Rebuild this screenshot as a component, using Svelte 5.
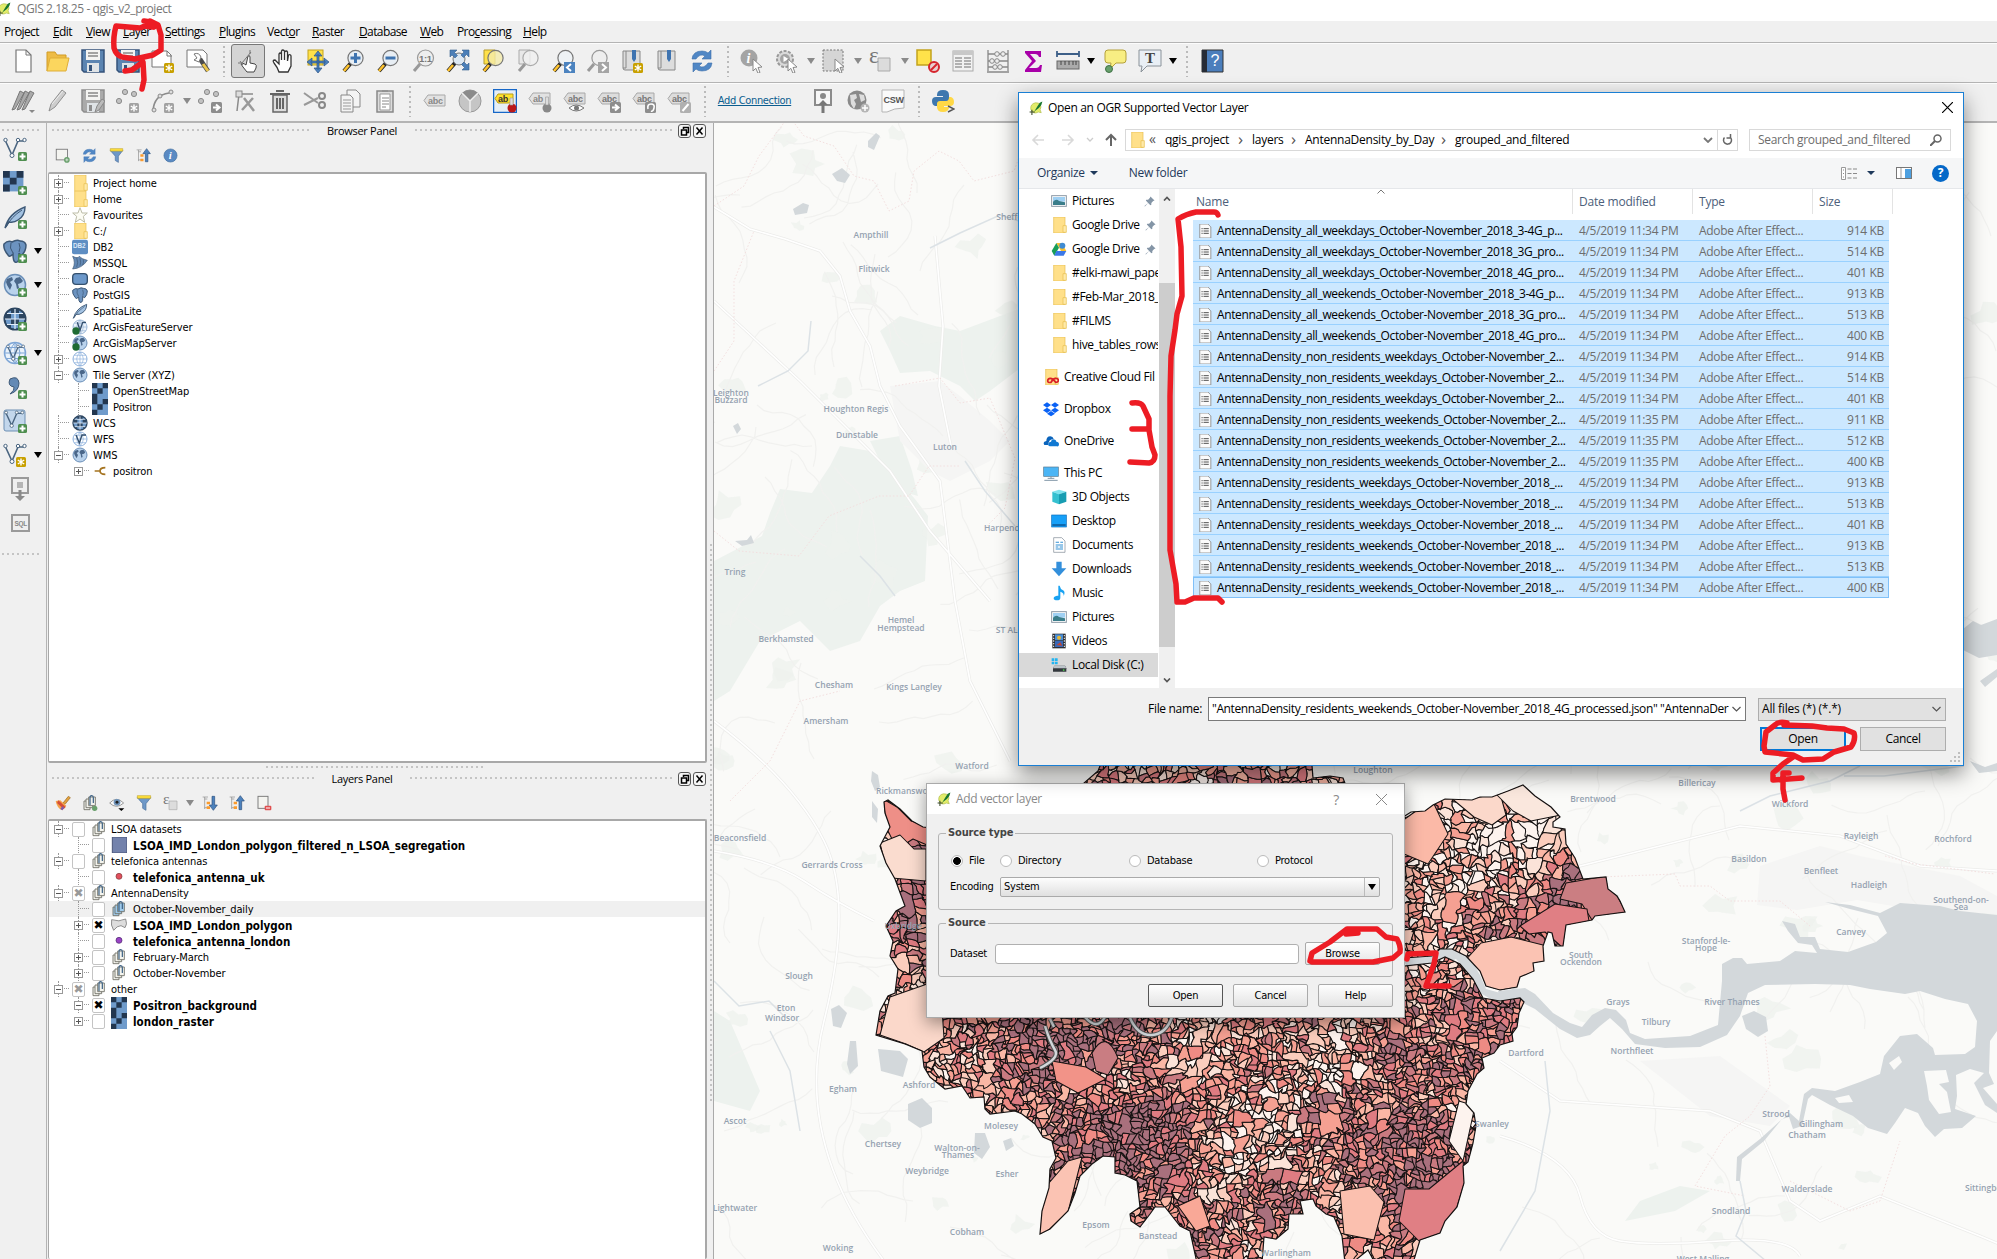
<script>
  // Menu entries: [before, accelerator, after]
  const menus = [
    ['Pro', 'j', 'ect'], ['', 'E', 'dit'], ['', 'V', 'iew'], ['', 'L', 'ayer'], ['', 'S', 'ettings'], ['', 'P', 'lugins'],
    ['Vect', 'o', 'r'], ['', 'R', 'aster'], ['', 'D', 'atabase'], ['', 'W', 'eb'], ['Pro', 'c', 'essing'], ['', 'H', 'elp']
  ];

  const lens = (c, fill) => `<path d="M3 22L10 14" stroke="#222" stroke-width="4"/><path d="M3 22L8 16" stroke="${c}" stroke-width="2.6"/><circle cx="14.5" cy="9" r="7.6" fill="${fill}" stroke="#777" stroke-width="1.2"/>`;
  const star = '<rect x="13" y="14" width="10" height="10" rx="1.5" fill="#c8a000"/><path d="M18 15.5v7M14.8 17l6.4 4M21.2 17l-6.4 4" stroke="#fff" stroke-width="1.4"/>';
  const starG = star.replace('#c8a000', '#a2a2a2');
  const plus = '<rect x="15" y="15" width="9" height="9" rx="1.5" fill="#4f8f50"/><path d="M19.5 16.5v6M16.5 19.5h6" stroke="#fff" stroke-width="2"/>';
  const vee = '<path d="M2.5 4L9 18 15 4h6" fill="none" stroke="#4a6580" stroke-width="1.6"/><g fill="#fff" stroke="#4a6580"><circle cx="2.5" cy="3" r="1.7"/><circle cx="15" cy="3" r="1.7"/><circle cx="21.5" cy="3" r="1.7"/><circle cx="9" cy="18.5" r="2"/></g>';
  const sheets = (f) => `<g fill="${f}" stroke="#6d6d65" stroke-width="1.300"><path d="M3 9h9v13H3z"/><path d="M6 6h10v13H6z"/><path d="M10 3h10v13H10z"/></g><path d="M12 15V4q0-3 2.500-3T17 4v8" fill="none" stroke="#3c6184" stroke-width="1.800"/>`;
  const globe = (f, l) => `<circle cx="12" cy="12" r="10.500" fill="${f}" stroke="${l}" stroke-width="1.500"/><path d="M1.500 12h21M12 1.500v21M3.500 6.500h17M3.500 17.500h17M12 1.500q-10 10.500 0 21M12 1.500q10 10.500 0 21" fill="none" stroke="${l}" stroke-width="1"/>`;
  const world = '<circle cx="12" cy="12" r="10.500" fill="#b9d2ec" stroke="#6b8fb8" stroke-width="1.500"/><path d="M4 6l5-2 1 3-3 2 2 3-2 5-3-5-1-3zM13 5l4-1 3 4-2 2-3 1 1 4-2 1-1-5-2-3z" fill="#4a678a"/>';
  const wcs = '<circle cx="12" cy="12" r="10.500" fill="#6f9bcb" stroke="#2c4560" stroke-width="2"/><path d="M2 6h6v6H2zM16 6h6v6h-6zM8 12h8v6H8zM8 1h8v5H8zM2 18h6v3H6zM16 18h6l-4 3z" fill="#2c4560"/><path d="M2 12h20M12 2v20M4 6.500h16M4 17.500h16" stroke="#e3eefa" stroke-width="1.200"/>';
  const tag = (b, t) => `<path d="M5 4h17v11H5L1 9.500z" fill="${b}" stroke="#a8a8a8"/><text x="5" y="13" font-size="9" font-weight="700" font-family="Liberation Sans" fill="${t}">abc</text>`;
  const tiles = '<rect width="24" height="24" fill="#6f9bcb"/><path d="M0 0h8v8H0zM16 0h8v8h-8zM8 8h8v8H8zM0 16h8v8H0z" fill="#22364f"/>';
  const elephant = '<path d="M1 5q4-4 8-2q5-3 8-1q5 0 6 4q0 6-4 10q-2 0-3-2v6q-1 4-4 3q-2-1-2-8q-4 4-5 1Q0 10 1 5z" fill="#6c93c0" stroke="#3d5876" stroke-width="1.500"/><path d="M8 4q-2 5 2 10M16 4q2 5 0 9" fill="none" stroke="#3d5876"/>';
  const feather = '<path d="M2 23Q6 8 22 2q0 9-7 13q-4 3-9 2z" fill="#a3c2e2" stroke="#3d5876" stroke-width="1.400"/><path d="M3 22Q8 12 19 5" stroke="#3d5876" fill="none"/>';
  const refresh = '<path d="M2 10Q3 2 12 2q4 0 6 2l3-3v9h-9l3-3q-5-3-9 3zM22 14q-1 8-10 8q-4 0-6-2l-3 3v-9h9l-3 3q5 3 9-3z" fill="#5087c5" stroke="#3e70ab" stroke-width=".6"/>';
  const funnel = '<path d="M2 4h20l-7 9v10l-5-3v-7z" fill="#6e98c8" stroke="#4a6f9c"/><path d="M2 1h20v4H2z" fill="#ffe03c" stroke="#b99a20" stroke-width=".8"/>';
  const updown = (d) => `<path d="M4 3v18M4 6h4M4 19h4M1 3h8" stroke="#888" fill="none"/><path d="M7 10h5v4H7zM7 17h5v4H7z" fill="#fb9b2d"/><path d="${d}" fill="#4d82bd" stroke="#2b4f7c"/>`;
  const up = updown('M17 1l6 8h-4v13h-4V9h-4z');
  const down = updown('M17 23l6-8h-4V2h-4v13h-4z');
  const folder = '<path d="M4 0h17v24H4z" fill="#ffe08a" stroke="#e6bd4c"/><path d="M18 13h5v10h-5z" fill="#ffeaa8" stroke="#e6bd4c"/>';
  const cursor = '<path d="M13 10l9 8-4 .5 2 5-2 .8-2.200-5L13 22z" fill="#fff" stroke="#888"/>';
  const pencil = '<path d="M3 22l2-7L16 1l4 3L9 18z" fill="#cdcdcd" stroke="#8f8f8f"/><path d="M6 15l11-13" stroke="#eee"/>';
  const dots = '<g fill="#c2c2c2" stroke="#8b8b8b"><circle cx="9" cy="3" r="2.600"/><circle cx="18" cy="5" r="2.600"/><circle cx="3" cy="12" r="2.600"/></g>';
  const arrowBox = '<rect x="13" y="13" width="11" height="11" rx="1.500" fill="#8d8d8d"/><path d="M15 18.500h5M18 15.500l3.500 3-3.500 3" stroke="#fff" stroke-width="2" fill="none"/>';
  const floppy = (c, d) => `<path d="M1 1h22v22H3l-2-2z" fill="${c}" stroke="${d}" stroke-width="1.500"/><path d="M5 1h14v10H5z" fill="#f4f4f2"/><path d="M7 4h10M7 7h10" stroke="#888" stroke-width="1.400"/><path d="M6 14h12v9H6z" fill="#dfe3e6"/><path d="M8 16h3v6H8z" fill="${d}"/>`;
  const picture = '<rect x="1" y="4" width="22" height="16" fill="#fff" stroke="#8b98a5" stroke-width="1.500"/><path d="M3 6h18v7H3z" fill="#9fd0f3"/><path d="M3 13q5-5 9-1l9 2v4H3z" fill="#3a7d8a"/>';

  const icons = {
    blank: '<path d="M5 1h10l5 5v17H5z" fill="#fff" stroke="#777" stroke-width="1.200"/><path d="M15 1v5h5" fill="none" stroke="#777"/>',
    open: '<path d="M1 22V3h8l2 3h9v4" fill="#eebc45" stroke="#d19b25"/><path d="M1 22L4 9h19l-3 13z" fill="#fbd65e" stroke="#dfae38"/>',
    save: floppy('#5b84b1', '#34527a'),
    saveAs: floppy('#5b84b1', '#34527a') + '<path d="M12 24l2-5 6-4 4 3-5 5z" fill="#4f9058"/>',
    layout: '<path d="M1 2h15l4 4v12H1z" fill="#fff" stroke="#777"/><path d="M16 2v5h5" fill="none" stroke="#777"/>' + star,
    composer: '<path d="M1 1h16l4 4v13H1z" fill="#fff" stroke="#777"/><path d="M14 10l8 12" stroke="#4b4b4b" stroke-width="4.500"/><path d="M17 15l5 7" stroke="#ebc64c" stroke-width="3"/><path d="M8 5q5-2 7 3l-2 5-5-2 3-2z" fill="#fff" stroke="#777"/>',
    touch: '<path d="M11 23q-5-6-6-8q1-2 5 1l2-9q2-1 2 1v6l5 1q2 1 1 4l-2 4z" fill="#fff" stroke="#444"/><path d="M6 14L15 3M14 5V1M4 12l3 4M2 14h4" stroke="#777" fill="none"/>',
    hand: '<path d="M8 23q-1-4-5-9q-2-3 1-3l4 4V5q1-2 2.500 0v6V2q1-2 3 0v9V3q2-2 3 0v9l1-6q2-1 2.500 1v10l-3 6z" fill="#fff" stroke="#333" stroke-width="1.300"/>',
    panSel: '<rect x="2" y="1" width="15" height="15" fill="#ffe14a" stroke="#c2a21c"/><g fill="#4c83bf" stroke="#2b5386" stroke-width=".7"><path d="M12 2l4 5H8zM12 24l4-5H8zM1 13l5-4v8zM23 13l-5-4v8z"/><path d="M11 6h2v14h-2zM5 12h14v2H5z"/></g>',
    zin: lens('#ffc32e', '#e8eef4') + '<path d="M14.500 4v10M9.500 9h10" stroke="#3f74b0" stroke-width="3"/>',
    zout: lens('#ffc32e', '#e8eef4') + '<path d="M9.500 9h10" stroke="#3f74b0" stroke-width="3"/>',
    z11: '<path d="M3 22L9 15" stroke="#999" stroke-width="3"/><circle cx="14.500" cy="9" r="8" fill="#eee" stroke="#999" stroke-width="1.200"/><text x="8" y="12.500" font-size="9.500" font-weight="700" font-family="Liberation Sans" fill="#777">1:1</text>',
    zfull: '<path d="M2 22L9 14" stroke="#222" stroke-width="4"/><path d="M2 22L7 16" stroke="#ffc32e" stroke-width="2.600"/><circle cx="13" cy="10" r="6" fill="#dce7f2" stroke="#777"/><path d="M4 1h7L8.500 3.500l3 3-2.500 2.500-3-3L4 8zM23 1v7l-2.500-2.500-3 3L15 6l3-3L16 1zM23 21h-7l2.500-2.500-3-3L18 13l3 3 2-2z" fill="#4c7fb8" stroke="#34608f" stroke-width=".6"/>',
    zsel: '<path d="M3 1h11v14H3z" fill="#ffe14a" stroke="#b59b2c"/>' + lens('#ffc32e', '#f4ebaacc'),
    zlay: '<path d="M3 1h11v14H3z" fill="#e8e8e8" stroke="#aaa"/><path d="M3 22L9 15" stroke="#999" stroke-width="3"/><circle cx="14.500" cy="9" r="7.600" fill="#f0f0f0cc" stroke="#aaa" stroke-width="1.200"/>',
    zlast: lens('#ffc32e', '#eef2f5') + '<rect x="13" y="13" width="11" height="11" fill="#4c83bf"/><path d="M20 15l-4 3.500 4 3.500" stroke="#fff" stroke-width="2" fill="none"/>',
    znext: '<path d="M3 22L9 15" stroke="#999" stroke-width="3"/><circle cx="14.500" cy="9" r="7.600" fill="#eee" stroke="#999" stroke-width="1.200"/><rect x="13" y="13" width="11" height="11" fill="#a5a5a5"/><path d="M17 15l4 3.500-4 3.500" stroke="#fff" stroke-width="2" fill="none"/>',
    bookNew: '<path d="M3 2h17v19H5q-2 0-2-2z" fill="#ddd" stroke="#888"/><path d="M6 2v17H3" stroke="#888" fill="none"/><path d="M12 1h4v9l-2 3-2-3z" fill="#3f74b0"/>' + star,
    book: '<path d="M3 2h17v19H5q-2 0-2-2z" fill="#ddd" stroke="#888"/><path d="M6 2v17H3" stroke="#888" fill="none"/><path d="M12 1h4v9l-2 3-2-3z" fill="#3f74b0"/>',
    refresh, funnel, up, down, folder, tiles, picture,
    info: '<circle cx="9" cy="9" r="8.500" fill="#a4a4a4"/><text x="6.500" y="14" font-size="14" font-style="italic" font-weight="700" font-family="Liberation Serif" fill="#fff">i</text>' + cursor,
    gear: '<circle cx="10" cy="10" r="8" fill="#d9d9d9" stroke="#999" stroke-width="2" stroke-dasharray="3 1.500"/><circle cx="10" cy="10" r="5" fill="#a4a4a4"/><path d="M8.500 7l5 3-5 3z" fill="#fff"/>' + cursor,
    select: '<rect x="1" y="1" width="20" height="21" fill="#d5d5d5" stroke="#777" stroke-dasharray="2 1.500"/>' + cursor,
    eps: '<path d="M9 9h12v13H9z" fill="#dcdcdc" stroke="#aaa"/><text x="0" y="14" font-size="23" font-family="Liberation Serif" fill="#777">ε</text>',
    desel: '<rect x="1" y="1" width="14" height="15" fill="#ffe24a" stroke="#c2a21c" stroke-width="1.500"/><circle cx="18" cy="18" r="5" fill="#e8d0d0" stroke="#d6252d" stroke-width="2"/><path d="M15 21l6-6" stroke="#d6252d" stroke-width="2"/>',
    table: '<rect x="2" y="2" width="20" height="20" fill="#f2f2f2" stroke="#aaa"/><path d="M2 2h20v4H2z" fill="#c8c8c8"/><path d="M4 9h7M13 9h7M4 12h7M13 12h7M4 15h7M13 15h7M4 18h7M13 18h7" stroke="#9c9c9c" stroke-width="1.400"/>',
    abacus: '<path d="M2 1v21M22 1v21M2 5h20M2 12h20M2 18h20M1 23h22" stroke="#888" fill="none" stroke-width="1.300"/><g fill="#eee" stroke="#888"><circle cx="11" cy="5" r="2.300"/><circle cx="17" cy="5" r="2.300"/><circle cx="6" cy="12" r="2.300"/><circle cx="11" cy="12" r="2.300"/><circle cx="9" cy="18" r="2.300"/><circle cx="14" cy="18" r="2.300"/></g>',
    sigma: '<path d="M4 2h16v6h-2q-1-3-4-3H9l6 7-7 7h7q3 0 4-3h2l-1 7H4v-2l7-9-7-8z" fill="#a800a8"/>',
    ruler: '<path d="M1 5h22M1 2v6M23 2v6" stroke="#3d5f88" stroke-width="1.800"/><rect x="1" y="12" width="22" height="8" fill="#ababab" stroke="#666"/><path d="M5 12v4M9 12v4M13 12v4M17 12v4M20 12v4" stroke="#444"/>',
    tip: '<path d="M5 1h15q3 0 3 3v7q0 3-3 3h-7l-6 6 1-6H5q-3 0-3-3V4q0-3 3-3z" fill="#f8ee83" stroke="#b5a13a"/><circle cx="6" cy="20" r="3.500" fill="#68a06c" stroke="#3f7145"/>',
    textAn: '<path d="M1 1h22v16H9l-6 6 1-6H1z" fill="#e9eff5" stroke="#8a9299"/><text x="7" y="14" font-size="15" font-weight="700" font-family="Liberation Serif" fill="#444">T</text>',
    helpBook: '<path d="M2 1h21v22H2z" fill="#4b7ebc" stroke="#333"/><path d="M2 1h5v22H2z" fill="#262b35"/><text x="10.500" y="17" font-size="16" font-family="Liberation Sans" fill="#fff">?</text>',
    pencils: '<path d="M1 21L9 2l4 2L4 20zM6 21L14 2l4 2L9 20zM11 21L19 2l4 2-9 16z" fill="#aaa" stroke="#777"/><path d="M18 21h6l-3 3z" fill="#888"/>',
    pencil, saveG: floppy('#aaa', '#8d8d8d') + '<path d="M14 23l2-6 5-7 3 2-6 9z" fill="#bbb" stroke="#888"/>',
    addF: dots + starG, curve: '<path d="M2 22Q3 6 18 4" fill="none" stroke="#8b8b8b" stroke-width="1.600"/><g fill="#ddd" stroke="#8b8b8b"><circle cx="3" cy="21" r="2"/><circle cx="9" cy="7" r="2"/><circle cx="20" cy="3" r="2"/></g>' + starG,
    moveF: dots + arrowBox, node: '<path d="M4 22L6 5h14" stroke="#8b8b8b" fill="none" stroke-width="1.500"/><rect x="3" y="2" width="6" height="6" fill="#ddd" stroke="#888"/><path d="M9 21L20 9M11 9l10 13" stroke="#999" stroke-width="2.500"/>',
    trash: '<path d="M5 6h14v17H5z" fill="#ddd" stroke="#666" stroke-width="1.500"/><path d="M2 5h20M8 2h8M9 9v11M12 9v11M15 9v11" stroke="#666" stroke-width="2"/>',
    cut: '<path d="M1 4l14 10M1 16L15 9" stroke="#999" stroke-width="2"/><g fill="none" stroke="#888" stroke-width="2"><circle cx="19" cy="7" r="3"/><circle cx="19" cy="16" r="3"/></g>',
    copy: '<path d="M9 1h9l4 4v13H9z" fill="#f4f4f4" stroke="#888"/><path d="M3 6h9l3 3v14H3z" fill="#f4f4f4" stroke="#888"/><path d="M5 11h8M5 14h8M5 17h8M5 20h8" stroke="#999"/>',
    paste: '<path d="M4 2h16v21H4z" fill="#dcdcdc" stroke="#888" stroke-width="1.500"/><path d="M7 5h10v16H7z" fill="#fff" stroke="#999"/><path d="M9 9h7M9 12h7M9 15h7M9 18h4M9 2h6" stroke="#888"/>',
    abc: tag('#e2e2e2', '#888').replace('<path', '<path transform="translate(0 2)"').replace('y="13"', 'y="15"'),
    pie: '<circle cx="12" cy="12" r="11" fill="#c5c5c5" stroke="#999"/><path d="M12 12L4 4Q12-2 20 4z" fill="#8b8b8b"/><path d="M12 12v11M12 12L4 4M12 12l8-8" stroke="#eee" stroke-width="1.500"/>',
    abRed: '<rect x=".5" y=".5" width="23" height="23" fill="#e6eef5" stroke="#1667c8" stroke-width="1.500"/><path d="M5 5h15v9H5L2 9.500z" fill="#ffe22e" stroke="#b89d19"/><text x="5" y="13" font-size="9" font-weight="700" font-family="Liberation Sans" fill="#333">ab</text><circle cx="19" cy="19" r="4.500" fill="#bb1818"/><path d="M17 9h3v7h-3z" fill="#ddd" stroke="#999" stroke-width=".6"/>',
    abGrey: tag('#e2e2e2', '#888').replace('abc', 'ab') + '<circle cx="19" cy="19" r="4.500" fill="#888"/><path d="M17.500 8h3v8h-3z" fill="#ddd" stroke="#999" stroke-width=".6"/>',
    abEye: tag('#ddd', '#777') + '<path d="M6 19q7-6 15 0q-8 6-15 0z" fill="#fff" stroke="#777"/><circle cx="13.500" cy="19" r="2.500" fill="#777"/>',
    abMove: tag('#ddd', '#777') + arrowBox,
    abRot: tag('#ddd', '#777') + '<rect x="13" y="13" width="11" height="11" rx="1.500" fill="#8d8d8d"/><path d="M16 20q-1-5 3-5t3 4-3 3" stroke="#fff" stroke-width="1.600" fill="none"/>',
    abEdit: tag('#ddd', '#777') + '<rect x="13" y="13" width="11" height="11" rx="1.500" fill="#b0b0b0"/><path d="M15.500 22l6-7" stroke="#fff" stroke-width="2"/>',
    dbUp: '<path d="M4 1h16v15H4z" fill="#f6f6f6" stroke="#8b8b8b" stroke-width="2"/><circle cx="12" cy="7" r="3" fill="#888"/><path d="M12 11l5 5h-3.500v8h-3v-8H7z" fill="#777"/>',
    globeG: '<circle cx="11" cy="11" r="9.500" fill="#8a8a8a"/><path d="M4 6l6-1 1 4-3 2 2 4-2 5-3-5zM13 5l5 1 1 5-4 2z" fill="#ddd"/><circle cx="19" cy="19" r="4.500" fill="#b5b5b5"/><path d="M19 16v6M16 19h6" stroke="#fff" stroke-width="1.500"/>',
    csw: '<path d="M1 1h22v18q-10 0-17 4H1z" fill="#fafafa" stroke="#b5b5b5"/><text x="2.500" y="14" font-size="9" font-weight="700" font-family="Liberation Sans" fill="#555">CSW</text>',
    python: '<path d="M6 6q0-5 6-5t6 5v4q0 3-3 3H9q-3 0-3 4H4q-3-1-3-5t4-4h7V7H6z" fill="#3e77ae"/><path d="M18 18q0 5-6 5t-6-5v-3q0-3 3-3h6q3 0 3-4h2q3 1 3 5t-4 4h-6v1z" fill="#ffd846"/><path d="M17 17l6 3-6 3" stroke="#555" stroke-width="1.500" fill="none"/>',
    lVec: vee + plus, lRas: '<g transform="scale(.85)">' + tiles + '</g>' + plus, lSpa: feather + plus,
    lPg: elephant + plus, lWms: world + plus, lWcs: wcs + plus,
    lWfs: globe('#eaf2fa', '#7fa6d6') + '<g transform="translate(3 3) scale(.8)">' + vee + '</g>' + plus,
    lCsv: '<path d="M7 4q8-4 9 4q0 8-9 11q5-4 4-7q-7-1-4-8z" fill="#6389b5" stroke="#3d5876"/>' + plus,
    lVirt: '<rect x="1" y="1" width="21" height="21" rx="2" fill="#c3d7ec" stroke="#6d8fb3"/><g transform="translate(1 1) scale(.85)">' + vee + '</g>' + plus,
    lNew: vee + star,
    lGps: '<path d="M4 1h16v15H4z" fill="#efefef" stroke="#9a9a9a" stroke-width="2"/><path d="M9 5h6v6H9z" fill="#b5b5b5"/><path d="M12 24l-5-5h3.500v-6h3v6H17z" fill="#8a8a8a"/>',
    lSql: '<rect x="4" y="4" width="17" height="16" fill="#efefef" stroke="#9a9a9a" stroke-width="2"/><text x="6.500" y="14.500" font-size="6.500" font-weight="700" font-family="Liberation Sans" fill="#888">SQL</text>',
    addSel: '<rect x="2" y="2" width="18" height="17" fill="#f4f4f0" stroke="#777" stroke-width="1.400"/><circle cx="19" cy="19" r="4.500" fill="#69a06c"/><path d="M19 16.500v5M16.500 19h5" stroke="#fff"/>',
    infoBlue: '<circle cx="12" cy="12" r="10.500" fill="#5a8ac3" stroke="#44709f"/><text x="9" y="18" font-size="17" font-style="italic" font-weight="700" font-family="Liberation Serif" fill="#fff">i</text>',
    star: '<path d="M12 1l3 8h8l-6 5 2 9-7-5-7 5 2-9-6-5h8z" fill="#fcfcf4" stroke="#bcbca8" stroke-width="1.500"/>',
    db2: '<rect y="1" width="24" height="22" rx="3" fill="#5e8ec3"/><text x="1.500" y="14" font-size="9.500" font-weight="700" font-family="Liberation Sans" fill="#dce9f7">DB2</text>',
    mssql: '<path d="M1 2q8 4 10 0q3 4 12 6q-8 12-22 13q5-9 0-19z" fill="#6389b5" stroke="#3d5876"/><path d="M7 4q3 8 0 14M12 5q2 6 0 11M17 7q1 4-1 8" stroke="#3d5876" fill="none"/>',
    oracle: '<rect x="1" y="4" width="22" height="16" rx="5" fill="#6c98ca" stroke="#34506e" stroke-width="2"/>',
    elephant, feather, world,
    arcF: globe('#eaf2fa', '#9ab6d6') + '<path d="M8 5l4 12 4-12h5" fill="none" stroke="#34506e" stroke-width="2"/><circle cx="6" cy="18" r="5.500" fill="#1f6b33"/>',
    arcM: world + '<circle cx="6" cy="18" r="5.500" fill="#1f6b33"/>',
    ows: globe('#fff', '#8cb0dc'), wcs,
    wfs: globe('#fff', '#8cb0dc') + '<path d="M6 6l5 12 4-12h6" fill="none" stroke="#34506e" stroke-width="2"/>',
    plug: '<path d="M4 12h8M20 7q-8 0-8 5t8 5" fill="none" stroke="#a5731f" stroke-width="2.500"/>',
    brush: '<path d="M12 12l8-10 3 2-8 10z" fill="#e3a23f" stroke="#9b6a1e"/><path d="M1 9l7-1 9 8-6 7Q3 20 1 9z" fill="#f4a24a"/><path d="M5 8l11 10-3 3L3 12z" fill="#d54e38"/><path d="M8 21l3-4 3 2-3 4z" fill="#7a5fb0"/>',
    sheetAdd: sheets('#f1f1ec') + '<circle cx="19" cy="20" r="4" fill="#69a06c"/>',
    sheet: sheets('#f4f4ee'), sheetSel: sheets('#9fcbec'),
    eye: '<path d="M1 12Q11 1 22 12Q11 22 1 12z" fill="#fafafa" stroke="#999" stroke-width="1.500"/><circle cx="12" cy="11" r="5" fill="#6e93ba"/><circle cx="12" cy="11" r="2.200" fill="#222"/><path d="M14 20h9l-4.500 4z" fill="#000"/>',
    remove: '<rect x="3" y="2" width="15" height="18" fill="#f4f4f0" stroke="#777" stroke-width="1.400"/><rect x="13" y="16" width="10" height="7" rx="1.500" fill="#e05050"/><path d="M15 19.500h6" stroke="#fff" stroke-width="1.500"/>',
    square: '<rect x="2" y="0" width="22" height="24" fill="#7382ac" stroke="#4a5578" stroke-width="1.500"/>',
    dotR: '<circle cx="12" cy="11" r="4.500" fill="#e2505e" stroke="#733"/>', dotP: '<circle cx="12" cy="11" r="4.500" fill="#9a43c4" stroke="#426"/>',
    poly: '<path d="M1 4q11 4 21-1q3 8-1 13l-6-3q-6 0-11 7Q-1 12 1 4z" fill="#ddd" stroke="#888" stroke-width="1.400"/>',
    gdrive: '<path d="M8 3h8l7 12h-8z" fill="#fbc02d"/><path d="M8 3l4 7-7 12-4-7z" fill="#189d58"/><path d="M8 15h15l-4 7H5z" fill="#3b78e7"/><circle cx="17" cy="7" r="4.500" fill="#3f8bd3"/>',
    cc: folder + '<path d="M7 18q0-4 4-4t8 6q4 0 4-3t-4-3-7 6q-5 1-5-2z" fill="none" stroke="#da1f26" stroke-width="2.500"/>',
    dropbox: '<path d="M6 2l6 4-6 4-6-4zM18 2l6 4-6 4-6-4zM6 10l6 4-6 4-6-4zM18 10l6 4-6 4-6-4zM12 15l6 4-6 4-6-4z" fill="#0a62f5"/>',
    onedrive: '<path d="M2 18q-3-5 3-6q0-7 6-7q4 0 5 4q-8 0-8 9z" fill="#0a64bc"/><path d="M10 20q-3-1-2-4t4-3q1-5 6-3q2 1 2 3q4 0 4 4t-3 3z" fill="#1078d2"/>',
    pc: '<rect x="1" y="3" width="22" height="14" fill="#4bb5f5" stroke="#55788f"/><path d="M7 20h10M2 23h20M12 17v3" stroke="#8197a8" stroke-width="1.500"/>',
    cube: '<path d="M2 4l10-3 11 3-11 4z" fill="#7fe3ee"/><path d="M2 4l10 4v15L2 19z" fill="#35c0d0"/><path d="M12 8l11-4v15l-11 4z" fill="#179db2"/>',
    desktop: '<rect x="1" y="3" width="22" height="18" fill="#17a0f8" stroke="#0b6dbb"/><path d="M2 18h20" stroke="#0b4f8a" stroke-width="2"/>',
    doc: '<path d="M4 1h12l5 5v17H4z" fill="#fff" stroke="#7c8792"/><path d="M7 8h5M7 12h11M7 15h4M13 15h5M7 18h11M14 8h4" stroke="#3290d4" stroke-width="1.600"/>',
    dl: '<path d="M8 1h8v10h7L12 23 1 11h7z" fill="#338fdb"/>',
    music: '<path d="M13 1q1 5 5 7t1 9q1-5-5-7v9q0 4-5 4t-5-3 5-4h2V1z" fill="#18a2f2"/>',
    video: '<rect x="2" y="1" width="20" height="22" fill="#2d2f33"/><rect x="6" y="2" width="12" height="9" fill="#4a8fd8"/><rect x="6" y="12" width="12" height="9" fill="#3868b8"/><circle cx="12" cy="7" r="3" fill="#e8b830"/><path d="M8 18l6-4 3 5z" fill="#c5432c"/><path d="M4 3v18M20 3v18" stroke="#eee" stroke-width="1.600" stroke-dasharray="2 2"/>',
    disk: '<path d="M1 2h4v4H1zM6 2h4v4H6zM1 7h4v4H1zM6 7h4v4H6z" fill="#22b4f0"/><path d="M5 13h16l2 4v5H3v-5z" fill="#33383d"/><path d="M5 13h16l2 4H3z" fill="#bcc3c9"/><circle cx="19" cy="19.500" r="1.300" fill="#4fe04f"/>',
    file: '<path d="M3 0h14l5 5v19H3z" fill="#fbfbfb" stroke="#8d8d8d" stroke-width="1.500"/><path d="M6 8h2M9.500 8h9M6 12h2M9.500 12h9M6 16h2M9.500 16h9" stroke="#444" stroke-width="1.600"/>',
    pin: '<path d="M14 1l9 9-3 1-4 4v4l-2 1-5-5-7 8-1-1 8-7-5-5 1-2h4l4-4z" fill="#8495a6"/>',
    q: '<path d="M3 14Q2 5 11 3q5 0 8 2q3 6 0 10l2 5-5-1q-9 5-13-5z" fill="#e2ec6a" stroke="#a5b43c"/><path d="M9 18L15 8q3-6 8-7q-1 7-6 11z" fill="#17762f"/><path d="M1 19h9M5 15v9" stroke="#3b4a2a" stroke-width="1.800"/>'
  };

  const bar1 = ['blank', 'open', 'save', 'saveAs', 'layout', 'composer', '|', 'touch!', 'hand', 'panSel', 'zin', 'zout', 'z11', 'zfull', 'zsel', 'zlay', 'zlast', 'znext', 'bookNew', 'book', 'refresh', '|', 'info', 'gear', 'v', 'select', 'v', 'eps', 'v', 'desel', 'table', 'abacus', 'sigma', 'ruler', 'V', 'tip', 'textAn', 'V', '|', 'helpBook'];
  const bar2 = ['pencils', 'pencil', 'saveG', 'addF', 'curve', 'v', 'moveF', 'node', 'trash', 'cut', 'copy', 'paste', '|', 'abc', 'pie', 'abRed', 'abGrey', 'abEye', 'abMove', 'abRot', 'abEdit', '|', 'link', 'dbUp', 'globeG', 'csw', '|', 'python'];
  const side = ['lVec', 'lRas', 'lSpa', 'lPg+', 'lWms+', 'lWcs', 'lWfs+', 'lCsv', 'lVirt', 'lNew+', 'lGps', 'lSql'];

  // depth, expander, icon, label
  const browser = [
    [0, '+', 'folder', 'Project home'], [0, '+', 'folder', 'Home'], [0, '', 'star', 'Favourites'], [0, '+', 'folder', 'C:/'],
    [0, '', 'db2', 'DB2'], [0, '', 'mssql', 'MSSQL'], [0, '', 'oracle', 'Oracle'], [0, '', 'elephant', 'PostGIS'],
    [0, '', 'feather', 'SpatiaLite'], [0, '', 'arcF', 'ArcGisFeatureServer'], [0, '', 'arcM', 'ArcGisMapServer'], [0, '+', 'ows', 'OWS'],
    [0, '-', 'world', 'Tile Server (XYZ)'], [1, '', 'tiles', 'OpenStreetMap'], [1, '', 'tiles', 'Positron'],
    [0, '', 'wcs', 'WCS'], [0, '', 'wfs', 'WFS'], [0, '-', 'world', 'WMS'], [1, '+', 'plug', 'positron']
  ];
  // depth, expander, check state, icon, label, bold
  const layers = [
    [0, '-', '', 'sheet', 'LSOA datasets', 0], [1, '', '', 'square', 'LSOA_IMD_London_polygon_filtered_n_LSOA_segregation', 1],
    [0, '-', '', 'sheet', 'telefonica antennas', 0], [1, '', '', 'dotR', 'telefonica_antenna_uk', 1],
    [0, '-', 'g', 'sheet', 'AntennaDensity', 0], [1, '', '', 'sheetSel', 'October-November_daily', 0],
    [1, '+', 'x', 'poly', 'LSOA_IMD_London_polygon', 1], [1, '', '', 'dotP', 'telefonica_antenna_london', 1],
    [1, '+', '', 'sheet', 'February-March', 0], [1, '+', '', 'sheet', 'October-November', 0],
    [0, '-', 'g', 'sheet', 'other', 0], [1, '-', 'x', 'tiles', 'Positron_background', 1], [1, '+', '', 'tiles', 'london_raster', 1]
  ];
  const places = [
    ['picture', 'Pictures', 1, 1], ['folder', 'Google Drive', 1, 1], ['gdrive', 'Google Drive', 1, 1], ['folder', '#elki-mawi_pape', 1], ['folder', '#Feb-Mar_2018_', 1],
    ['folder', '#FILMS', 1], ['folder', 'hive_tables_rows', 1], ['cc', 'Creative Cloud Fil', 0], ['dropbox', 'Dropbox', 0], ['onedrive', 'OneDrive', 0], ['pc', 'This PC', 0],
    ['cube', '3D Objects', 1], ['desktop', 'Desktop', 1], ['doc', 'Documents', 1], ['dl', 'Downloads', 1], ['music', 'Music', 1], ['picture', 'Pictures', 1], ['video', 'Videos', 1], ['disk', 'Local Disk (C:)', 1]
  ];
  const on = 'October-November_2';
  const groups = [
    ['all_weekdays_' + on + '018_', [914, 514, 401], ['3-4G_p...', '3G_pro...', '4G_pro...'], '34'],
    ['all_weekends_' + on + '018_', [913, 513, 400], ['3-4G_p...', '3G_pro...', '4G_pro...'], '34'],
    ['non_residents_weekdays_' + on + '...', [914, 514, 401], ['', '', ''], '34'],
    ['non_residents_weekends_' + on + '...', [911, 512, 400], ['', '', ''], '35'],
    ['residents_weekdays_' + on + '018_...', [913, 513, 401], ['', '', ''], '34'],
    ['residents_weekends_' + on + '018_...', [913, 513, 400], ['', '', ''], '34']
  ];
  const files = groups.flatMap(([n, sizes, ends, min]) => sizes.map((s, i) => ({ name: 'AntennaDensity_' + n + ends[i], date: `4/5/2019 11:${min} PM`, size: s + ' KB' })));

  // ---- Map ----
  let seed = 7;
  const rnd = () => { seed = (seed * 1664525 + 1013904223) % 4294967296; return seed / 4294967296; };
  const hash = (x, y, k) => { const s = Math.sin(x * 127.1 + y * 311.7 + k * 74.7) * 43758.5453; return s - Math.floor(s); };
  const noise = (x, y, k) => {
    const xi = Math.floor(x), yi = Math.floor(y), u = x - xi, v = y - yi;
    const a = hash(xi, yi, k), b = hash(xi + 1, yi, k), c = hash(xi, yi + 1, k), d = hash(xi + 1, yi + 1, k);
    const s = u * u * (3 - 2 * u), t = v * v * (3 - 2 * v);
    return a + (b - a) * s + (c - a) * t + (a - b - c + d) * s * t;
  };
  const area = (p) => { let s = 0; p.forEach(([x, y], i) => { const [a, b] = p[(i + 1) % p.length]; s += x * b - a * y; }); return Math.abs(s) / 2; };
  const clip = (p, nx, ny, c) => {
    const out = [];
    p.forEach((a, i) => {
      const b = p[(i + 1) % p.length], da = a[0] * nx + a[1] * ny - c, db = b[0] * nx + b[1] * ny - c;
      if (da >= 0) out.push(a);
      if (da * db < 0) { const t = da / (da - db); out.push([a[0] + (b[0] - a[0]) * t, a[1] + (b[1] - a[1]) * t]); }
    });
    return out;
  };
  // Shading hot spots: x, y, radius, strength
  const pale = [[1435, 895, 50, .4], [1265, 1110, 50, .2], [1330, 1055, 40, .35], [960, 1065, 45, .35], [1420, 960, 35, .45], [1540, 815, 45, .5], [1470, 1105, 25, .5], [1230, 1170, 30, .35], [1475, 840, 35, .3]];
  const dark = [[1560, 900, 60, .3], [1470, 1040, 50, .25], [1030, 1080, 60, .2], [1150, 1120, 60, .25], [1160, 1190, 50, .2], [1380, 1120, 70, .25], [905, 910, 40, .2], [1430, 1215, 60, .2], [1060, 1045, 40, .25], [1100, 1160, 50, .25]];
  const blob = (list, x, y) => list.reduce((s, [a, b, r, k]) => s + k * Math.exp(-((x - a) ** 2 + (y - b) ** 2) / (r * r)), 0);
  const colors = ['#fdf3ee', '#fbe3d8', '#fbcdbd', '#fab7a5', '#f5a092', '#ee8b84', '#df7c82', '#c97a80', '#a9707d'];
  const cellPaths = colors.map(() => '');
  const emit = (p) => {
    const cx = p.reduce((s, q) => s + q[0], 0) / p.length, cy = p.reduce((s, q) => s + q[1], 0) / p.length;
    const v = noise(cx / 40, cy / 40, 3) * .55 + rnd() * .8 - .12 + blob(dark, cx, cy) - blob(pale, cx, cy);
    let d = '';
    p.forEach((a, i) => {
      const b = p[(i + 1) % p.length], n = Math.max(1, Math.round(Math.hypot(b[0] - a[0], b[1] - a[1]) / 3));
      for (let k = 0; k < n; k++) {
        const x = a[0] + (b[0] - a[0]) * k / n, y = a[1] + (b[1] - a[1]) * k / n;
        d += (d ? 'L' : 'M') + (x + (noise(x / 5, y / 5, 1) - .5) * 8).toFixed(1) + ' ' + (y + (noise(x / 5, y / 5, 2) - .5) * 8).toFixed(1);
      }
    });
    cellPaths[Math.max(0, Math.min(8, Math.floor(v * 9)))] += d + 'Z';
  };
  const split = (p) => {
    const xs = p.map((q) => q[0]), ys = p.map((q) => q[1]);
    const x0 = Math.min(...xs), x1 = Math.max(...xs), y0 = Math.min(...ys), y1 = Math.max(...ys);
    const cx = (x0 + x1) / 2, cy = (y0 + y1) / 2;
    const r = Math.hypot((cx - 1225) / 370, (cy - 1010) / 300);
    const target = 36 + 260 * Math.max(0, r - .6) ** 2 + (noise(cx / 26, cy / 26, 9) > .8 ? 90 : 0);
    const a = area(p);
    if (a < target * 1.5 || (a < target * 8 && rnd() < .035)) return emit(p);
    const base = x1 - x0 > y1 - y0 ? 0 : Math.PI / 2, ang = base + (rnd() - .5) * .9;
    const nx = Math.cos(ang), ny = Math.sin(ang);
    const px = cx + (rnd() - .5) * (x1 - x0) * .2, py = cy + (rnd() - .5) * (y1 - y0) * .2, c = px * nx + py * ny;
    const l = clip(p, nx, ny, c), q = clip(p, -nx, -ny, -c);
    if (l.length < 3 || q.length < 3) return emit(p);
    split(l); split(q);
  };
  split([[865, 735], [1640, 735], [1640, 1275], [865, 1275]]);

  const london = 'M884 801L888 799 900 808 912 820 923 826 960 830 1050 790 1083 783 1098 770 1110 740H1310L1313 777 1330 775 1343 777 1346 785 1400 818 1411 811 1425 810 1433 804 1445 798 1472 799 1480 796 1492 796 1508 790 1523 784 1535 795 1551 806 1560 816 1553 821 1553 826 1565 828 1566 843 1575 857 1583 878 1606 876 1608 888 1617 895 1620 900 1625 911 1595 915 1592 919 1566 924 1563 945 1555 945 1552 932 1548 931 1543 945 1544 960 1533 962 1534 970 1520 976 1517 986 1500 989 1486 985 1480 970 1466 955 1452 948 1440 948 1432 955 1404 957 1404 965 1432 962 1445 956 1460 963 1473 978 1483 997 1500 1000 1520 997 1524 1001 1519 1012 1517 1026 1512 1033 1513 1040 1500 1044 1494 1052 1482 1057 1484 1067 1477 1073 1468 1090 1466 1103 1474 1112 1476 1125 1473 1142 1468 1161 1463 1165 1464 1182 1457 1206 1445 1220 1440 1232 1420 1239 1413 1262H1375L1368 1249 1352 1262H1345L1342 1235 1334 1216 1326 1213 1316 1205 1313 1198 1300 1200 1303 1213 1289 1213 1288 1228 1276 1238 1264 1236 1262 1262H1197L1190 1230 1180 1225 1165 1206 1155 1206 1150 1213 1140 1226 1131 1220 1130 1213 1140 1206 1137 1180 1125 1174 1115 1172 1115 1156 1103 1155 1092 1163 1080 1175 1075 1192 1068 1210 1050 1228 1040 1233 1042 1210 1049 1187 1050 1168 1056 1157 1052 1140 1043 1136 1035 1123 1022 1113 1015 1110 990 1113 985 1108 984 1096 970 1097 962 1085 945 1088 930 1076 924 1066 922 1050 905 1043 876 1034 880 1010 888 995 895 992 898 968 890 955 893 940 886 925 896 910 905 905 895 878 886 862 880 845 890 826 885 812z';
  const blobs = [];
  for (let i = 0; i < 190; i++) {
    const x = 714 + rnd() * 1283, y = 125 + rnd() * 1130, r = 3 + rnd() * 10;
    let d = '';
    for (let k = 0; k < 10; k++) { const t = k / 10 * 6.283, q = r * (.5 + rnd() * .9); d += (k ? 'L' : 'M') + (x + Math.cos(t) * q * 1.3).toFixed(1) + ' ' + (y + Math.sin(t) * q).toFixed(1); }
    blobs.push(d + 'Z');
  }
  let minor = '';
  for (let i = 0; i < 260; i++) {
    let x = 714 + rnd() * 1283, y = 125 + rnd() * 1130, t = rnd() * 6.283;
    minor += `M${x.toFixed(0)} ${y.toFixed(0)}`;
    for (let k = 0; k < 11; k++) { t += (rnd() - .5) * .9; x += Math.cos(t) * 9; y += Math.sin(t) * 9; minor += `L${x.toFixed(1)} ${y.toFixed(1)}`; }
  }
  const roads = 'M714 206L750 228 785 238 820 250 840 275 850 310 870 345 880 385 900 425 940 480 950 560 955 600 970 680 1010 760M714 300L800 380 850 430 890 470 930 530 990 600M714 850q60 10 90 30t70 40M1500 1060l60 40 150 10 50 20 30 70 30 20 60-25 100 40 97 40M1500 1135q70 20 80 60t40 45 100 0 80 15M1560 870l80-20 100-25 100 10 80 30 77 5M714 720q80 60 110 120t0 180 60 240M935 235l8 90-4 60 12 60';
  const towns = [
    ['Ampthill', 871, 237], ['Flitwick', 874, 271], ['Shefford', 1014, 219], ['Leighton', 731, 395], ['Buzzard', 731, 402], ['Houghton Regis', 856, 411], ['Dunstable', 857, 437], ['Luton', 945, 449], ['Harpenden', 1007, 530], ['Tring', 735, 574],
    ['Hemel', 901, 622], ['Hempstead', 901, 630], ['ST ALBANS', 1018, 632], ['Berkhamsted', 786, 641], ['Chesham', 834, 687], ['Kings Langley', 914, 689], ['Amersham', 826, 723], ['Watford', 972, 768], ['Rickmansworth', 908, 793], ['Beaconsfield', 740, 840], ['Gerrards Cross', 832, 867], ['Uxbridge', 903, 928], ['Slough', 799, 978], ['Eton', 786, 1010], ['Windsor', 782, 1020], ['Egham', 843, 1091], ['Ashford', 919, 1087], ['Ascot', 735, 1123], ['Molesey', 1001, 1128], ['Chertsey', 883, 1146], ['Walton-on-', 957, 1150], ['Thames', 958, 1157], ['Weybridge', 927, 1173], ['Esher', 1007, 1176], ['Lightwater', 735, 1210], ['Cobham', 967, 1234], ['Epsom', 1096, 1227], ['Banstead', 1158, 1238], ['Woking', 838, 1250], ['Warlingham', 1286, 1255], ['Loughton', 1373, 772],
    ['Brentwood', 1593, 801], ['Billericay', 1697, 785], ['Wickford', 1790, 806], ['Rayleigh', 1861, 838], ['Rochford', 1953, 841], ['Basildon', 1749, 861], ['Benfleet', 1821, 873], ['Hadleigh', 1869, 887], ['Southend-on-', 1961, 902], ['Sea', 1961, 909], ['Canvey', 1851, 934], ['Stanford-le-', 1706, 943], ['Hope', 1706, 950], ['South', 1581, 957], ['Ockendon', 1581, 964], ['Grays', 1618, 1004], ['River Thames', 1732, 1004], ['Tilbury', 1656, 1024], ['Dartford', 1526, 1055], ['Northfleet', 1632, 1053], ['Strood', 1776, 1116], ['Gillingham', 1821, 1126], ['Chatham', 1807, 1137], ['Swanley', 1492, 1126], ['Walderslade', 1807, 1191], ['Snodland', 1731, 1213], ['Sittingbourne', 1993, 1190], ['West Malling', 1703, 1261]
  ];
</script>

{#snippet ic(name, size = 24)}
  <svg class="ic" width={size} height={size} viewBox="0 0 24 24">{@html icons[name]}</svg>
{/snippet}

{#snippet toolbar(items)}
  <div class="toolbar">
    {#each items as it}
      {#if it === '|'}<i class="handle"></i>
      {:else if it === 'v' || it === 'V'}<i class="caret" class:dark={it === 'V'}></i>
      {:else if it === 'link'}<a class="conn" href="#top">Add Connection</a>
      {:else}<span class="tool"><span class:pressed={it.endsWith('!')}>{@render ic(it.replace('!', ''), 24)}</span></span>{/if}
    {/each}
  </div>
{/snippet}

{#snippet panelTitle(text)}
  <div class="ptitle">
    <i class="grip"></i><span>{text}</span><i class="grip"></i>
    <svg width="28" height="14" viewBox="0 0 28 14"><g fill="#f6f6f6" stroke="#555"><rect x=".5" y=".5" width="12" height="13" rx="2.5" /><rect x="15.500" y=".5" width="12" height="13" rx="2.500" /></g><path d="M5.500 5V3.500h5v5H9M3.500 6h5v5h-5zM18.500 3.500l6 7M24.500 3.500l-6 7" fill="none" stroke="#000" stroke-width="1.500" /></svg>
  </div>
{/snippet}

<div class="app">
  <header>{@render ic('q', 14)}<span>QGIS 2.18.25 - qgis_v2_project</span></header>
  <nav class="menu">{#each menus as m}<span>{m[0]}<u>{m[1]}</u>{m[2]}</span>{/each}</nav>
  {@render toolbar(bar1)}
  {@render toolbar(bar2)}
  <main>
    <aside>
      <i class="grip"></i>
      {#each side as s}
        <div class="stool">{@render ic(s.replace('+', ''), 24)}{#if s.endsWith('+')}<i class="caret dark"></i>{/if}</div>
      {/each}
      <i class="grip end"></i>
    </aside>
    <section class="docks">
      {@render panelTitle('Browser Panel')}
      <div class="ptools b">{#each ['addSel', 'refresh', 'funnel', 'up', 'infoBlue'] as n}<span>{@render ic(n, 15)}</span>{/each}</div>
      <div class="tree btree">
        {#each browser as [depth, ex, icon, label]}
          <div class="row" class:child={depth}>
            <i class="stem"></i><span class="ex">{#if ex}<b class:minus={ex === '-'}></b>{/if}</span>{@render ic(icon, 16)}<span class="lab">{label}</span>
          </div>
        {/each}
      </div>
      <i class="split"></i>
      {@render panelTitle('Layers Panel')}
      <div class="ptools l">{#each ['brush', 'sheetAdd', 'eye', 'funnel', 'eps', 'v', 'down', 'up', 'remove'] as n}{#if n === 'v'}<i class="caret"></i>{:else}<span>{@render ic(n, 16)}</span>{/if}{/each}</div>
      <div class="tree ltree">
        {#each layers as [depth, ex, chk, icon, label, bold], i}
          <div class="row" class:child={depth} class:hl={i === 5}>
            <i class="stem"></i><span class="ex">{#if ex}<b class:minus={ex === '-'}></b>{/if}</span><span class="chk" class:grey={chk === 'g'}>{chk ? '✖' : ''}</span>{@render ic(icon, 16)}<span class="lab" class:bold>{label}</span>
          </div>
        {/each}
      </div>
    </section>
    <i class="vsplit"></i>
    <div class="map">
      <svg width="1283" height="1137" viewBox="714 122 1283 1137">
        <defs><clipPath id="boundary"><path d={london} /></clipPath></defs>
        <g fill="#edf2ee">
          <path d="M714 560L762 535 770 512 780 488 812 492 830 465 840 445 870 450 890 470 915 498 928 515 925 580 900 590 880 605 860 640 830 650 800 620 760 640 730 690 714 700z" />
          <path d="M870 440L900 435 912 470 918 495 900 490 880 460z" />
          <path d="M880 330L900 315 935 325 960 330 1019 308V368L990 390 975 400 960 385 930 370 900 372 890 350z" />
          <path d="M714 1010L730 1020 760 1090 750 1110 714 1100zM1640 1200l40-15 30 5-35 20-50 10z" />
          {#each blobs as d}<path {d} opacity=".75" />{/each}
        </g>
        <path d="M890 385L940 380 960 395 990 420 1010 440 990 460 950 480 930 470 900 440zM1760 865l60-20 40 10 100 20 37 20v18l-80-4-60-10-60 10-40-5zM1640 1060l80-5 70 50-20 20-60-10z" fill="#f5f5f4" />
        <path d={minor} fill="none" stroke="#f1f1ef" stroke-width="1.200" />
        <path d={roads} fill="none" stroke="#ececea" stroke-width="3" />
        <path d={roads} fill="none" stroke="#fff" stroke-width="1.600" />
        <g fill="none" stroke="#f3dfdf" stroke-dasharray="1.500 2">
          <path d="M714 205l30-20 15-30 30-40 15 20 30 10 20 30 20 5 15 30 20-10 5-30 25-20 20 10 15 20 40-10 15-40 20-20M714 530l25 20 60 5 30-40 50-20 30 0 20-30 30 0M714 370l20-30 0-60 20-50M895 385l45-8 20 25 30-5 25 60-10 50-20 20M1600 876l75-3 5 12 30 0 20 15 50 0 30 25M1885 855l30 8 80 10M1765 1035l5 50-20 30-25 20-30 50 50 10M1790 1180l60 30 30-10 20-60M730 800l40-40 30-60 40-10" />
        </g>
        <g fill="#d3d8db">
          <path d="M1498 990L1525 987 1535 993 1553 1012 1570 1022 1582 1026 1592 1014 1605 1007 1616 1009 1626 1019 1630 1032 1645 1038 1690 1035 1718 1024 1722 980 1722 963 1733 957 1742 957 1747 963 1780 960 1795 950 1817 952 1812 944 1798 942 1788 930 1782 920 1795 923 1800 936 1815 936 1820 948 1848 951 1876 941 1887 932 1878 915 1850 908 1825 901 1850 904 1880 912 1900 902 1940 905 1960 910 1997 914V1030L1990 1040 1989 1072 1994 1083 1983 1087 1997 1103 1997 1112 1985 1104 1974 1082 1984 1072 1970 1068 1956 1074 1957 1095 1955 1108 1976 1115 1962 1127 1944 1128 1935 1136 1925 1125 1918 1112 1905 1107 1895 1122 1887 1133 1868 1127 1853 1115 1830 1104 1812 1094 1808 1098 1802 1125 1793 1128 1789 1116 1782 1118 1764 1140 1742 1158 1740 1180 1736 1180 1737 1156 1760 1138 1780 1120 1790 1112 1799 1120 1804 1093 1812 1087 1835 1090 1860 1081 1880 1073 1884 1055 1900 1035 1917 1033 1933 1047 1935 1054 1965 1053 1975 1046 1977 1020 1968 1003 1945 998 1920 990 1905 993 1870 988 1850 984 1815 983 1765 984 1748 992 1740 1015 1727 1034 1700 1046 1665 1047 1635 1043 1622 1028 1610 1017 1600 1025 1590 1034 1577 1037 1560 1028 1535 1008 1515 998 1500 1000z" />
          <path d="M1400 955h12l20-3 12-6 14 4 14 10 8 14 6 14 18 5 10-6 14 3-10 8-20 4-18-10-12-20-12-14-14 6-18 5h-14z" />
          <path d="M1963 628l10-8 8 4 16-6v36l-18 3-16-8zM1980 680l17-12v8l-12 10zM1970 760l15 6 12-4v8l-18 2zM832 173l10-6 8 7-5 8-8-2zM868 140l8-8 4 3-6 14-6-3zM793 208l10-6 6 2-2 8-12 2zM831 1008l8-4 8 8-6 15-8-2zM850 1040l6 0 2 25-8 8-3-10zM878 1048l22 2 8 8-5 18-22-6zM908 1103l14-6 10 10 0 15-12 5-12-8zM975 1132l10 0 5 14-8 12-8-6zM1003 1140l8-3 3 8-8 5zM733 425l5-3 3 6-4 5zM735 540l12-1 4-5 3 8-12 3zM872 770l6 4 2 12-5 4-4-10zM872 800l6 8-1 14-5-6z" />
          <path d="M1742 1015l12-5 12 6 2 14-10 6-12-8z" />
        </g>
        <g fill="#fafaf8"><path d="M1924 1070l22-1 3 12-10 2 8 8 4 20-12 2-10-14-2-14zM1835 1097l14-3 4 7-14 1zM1889 1062l10-7 3 6-8 8z" /></g>
        <path d="M811 320l-3 30-20 20-30 15M930 247l30-15 40-18 19 6M965 460l20 30 30 35M860 555l20 20 15 20M1740 1180l6 30-10 25 30 25M714 980l25 25 30-5 15 15M770 1030l20 40 10 60M1545 1060l5 50-15 80-35 60M1740 810l30-15 60-15 30-15M1964 765l-80 10-40 0" fill="none" stroke="#dce2e6" stroke-width="1.500" />
        <g clip-path="url(#boundary)" stroke="#161212" stroke-width="1.050" stroke-linejoin="round">
          {#each cellPaths as d, i}<path {d} fill={colors[i]} />{/each}
          <path d="M1092 1052q14-25 26 5l-10 17-12-4z" fill="#c97d82" />
          <path d="M1052 1060l34 6 20 12-28 14-22-12z" fill="#f29388" />
          <path d="M880 1034l10-38 40-14 12 25 2 30-20 14-18-8z" fill="#fbd8ca" />
          <path d="M883 798l14 8 14 14 16 4v20l-14-6-16 10-10-20z" fill="#ee8f87" />
          <path d="M880 842l20-8 14 14 12 0v32l-34-3-8-18z" fill="#fadccf" />
          <path d="M1463 962l20 30 36-6 22-14 10-26-40-10-30 6z" fill="#fbc3b3" />
          <path d="M1566 882l40-7 20 36-34 8-10-16-22-5z" fill="#cb7e82" />
          <path d="M1520 925l35-22 32 5 2 12-22 5-4 22-18-16-16 2z" fill="#e07f84" />
          <path d="M1475 1105l-12 55-14-20 10-40z" fill="#fdf3ee" />
          <path d="M1340 1190l30-5 14 16-10 38-30-6z" fill="#fbc0af" />
          <path d="M1405 1188l24 0 34-28 2 20-8 26-16 26-22 8-20-20z" fill="#e07f84" />
          <path d="M1042 1190l26-30 14-4-14 55-32 30z" fill="#fbc3b3" />
          <path d="M1178 1205l22-10 10 30-14 5z" fill="#f9a897" />
          <path d="M1402 820l14-10 18-7 14 30-20 30-24-10z" fill="#fbb9a7" />
          <path d="M1450 796l30 0 20-4 6 22-14 10-18-8z" fill="#fbd8ca" />
          <path d="M1497 794l26-12 38 32-30 6-18-10z" fill="#fae7dd" />
        </g>
        <path d={london} fill="none" stroke="#161212" stroke-width="1.200" />
        <g fill="none">
          <path d="M1050 1018l4 8M1085 1016q12 14 20 0M1130 1017q8 18 22 17t20-18M1045 1025q5 16 10 24t-15 18" stroke="#555" stroke-width="4.500" />
          <path d="M1050 1018l4 8M1085 1016q12 14 20 0M1130 1017q8 18 22 17t20-18M1045 1025q5 16 10 24t-15 18" stroke="#d3d8db" stroke-width="2.500" />
        </g>
        <g class="towns">{#each towns as [t, x, y]}<text {x} {y}>{t}</text>{/each}</g>
      </svg>
    </div>
  </main>

  <div class="vdlg">
    <div class="vtitle">{@render ic('q', 14)}<span>Add vector layer</span><em>?</em><svg width="11" height="11" viewBox="0 0 11 11"><path d="M0 0l11 11M11 0L0 11" stroke="#888" /></svg></div>
    <fieldset class="f1">
      <legend>Source type</legend>
      <div class="radios">{#each ['File', 'Directory', 'Database', 'Protocol'] as r, i}<span><i class:sel={i === 0}></i>{r}</span>{/each}</div>
      <div class="enc"><span>Encoding</span><div class="combo"><span>System</span><b><i class="caret dark"></i></b></div></div>
    </fieldset>
    <fieldset class="f2">
      <legend>Source</legend>
      <div class="data"><span>Dataset</span><div class="inp"></div><button>Browse</button></div>
    </fieldset>
    <div class="vbtns"><button class="def">Open</button><button>Cancel</button><button>Help</button></div>
  </div>

  <div class="fdlg">
    <div class="ftitle">{@render ic('q', 14)}<span>Open an OGR Supported Vector Layer</span><svg width="11" height="11" viewBox="0 0 11 11"><path d="M0 0l11 11M11 0L0 11" stroke="#000" stroke-width="1.200" /></svg></div>
    <div class="addr">
      <svg class="arrows" width="92" height="14" viewBox="0 0 92 14" fill="none"><path d="M13 7H2M7 2L2 7l5 5M31 7h11M37 2l5 5-5 5" stroke="#d9d9d9" stroke-width="1.600" /><path d="M56 5l3 3 3-3" stroke="#ccc" stroke-width="1.300" /><path d="M80 13V2M75 7l5-5 5 5" stroke="#666" stroke-width="2" /></svg>
      <div class="path">
        {@render ic('folder', 16)}
        <span class="p0">«</span><span class="p1">qgis_project</span><em>›</em><span class="p2">layers</span><em>›</em><span class="p3">AntennaDensity_by_Day</span><em>›</em><span class="p4">grouped_and_filtered</span>
        <svg class="drop" width="10" height="6" viewBox="0 0 10 6"><path d="M1 1l4 4 4-4" fill="none" stroke="#777" stroke-width="1.800" /></svg>
        <b><svg width="11" height="12" viewBox="0 0 11 12"><path d="M2.500 3.500A4 4 0 1 0 8 3M8.500 0v4h-4" fill="none" stroke="#666" stroke-width="1.500" /></svg></b>
      </div>
      <div class="search"><span>Search grouped_and_filtered</span><svg width="12" height="12" viewBox="0 0 12 12"><circle cx="7.500" cy="4.500" r="3.500" fill="none" stroke="#666" stroke-width="1.500" /><path d="M5 7L0 12" stroke="#666" stroke-width="2" /></svg></div>
    </div>
    <div class="ftools">
      <span class="org">Organize</span><i class="caret"></i><span class="nf">New folder</span>
      <svg class="vw" width="17" height="13" viewBox="0 0 17 13"><path d="M.5.500h4v12h-4z" fill="#fff" stroke="#999" /><path d="M6.500 2h4M12 2h4M6.500 6.500h4M12 6.500h4M6.500 11h4M12 11h4M2 3h1M2 6.500h1M2 10h1" stroke="#8a8a8a" stroke-width="1.200" /></svg><i class="caret"></i>
      <svg class="pv" width="16" height="12" viewBox="0 0 16 12"><rect x=".5" y=".5" width="15" height="11" fill="#fff" stroke="#777" /><path d="M9 2h6v9H9z" fill="#4ea0e0" /><path d="M5 1v10" stroke="#999" /></svg>
      <span class="hp">?</span>
    </div>
    <div class="fbody">
      <div class="places">
        {#each places as [icon, label, sub, pin], i}
          <div class="place" class:sub class:big={!sub && i < 10} class:gap={i === 7 || i === 10} class:last={i === 18}>{@render ic(icon, 16)}<span>{label}</span>{#if pin}<b>{@render ic('pin', 11)}</b>{/if}</div>
        {/each}
      </div>
      <div class="sb"><svg width="8" height="5" viewBox="0 0 8 5"><path d="M1 4.500l3-3 3 3" fill="none" stroke="#555" stroke-width="1.700" /></svg><i></i><svg width="8" height="5" viewBox="0 0 8 5"><path d="M1 .5l3 3 3-3" fill="none" stroke="#555" stroke-width="1.700" /></svg></div>
      <div class="files">
        <svg class="sort" width="8" height="5" viewBox="0 0 8 5"><path d="M.5 4.500L4 1l3.500 3.500" fill="none" stroke="#777" /></svg>
        <div class="head"><span>Name</span><span>Date modified</span><span>Type</span><span>Size</span></div>
        {#each files as f, i}
          <div class="file" class:focus={i === 17}>{@render ic('file', 14)}<span class="n">{f.name}</span><span>{f.date}</span><span>Adobe After Effect...</span><span class="s">{f.size}</span></div>
        {/each}
      </div>
    </div>
    <div class="ffoot">
      <div class="fr1"><span>File name:</span><div class="fin"><span>"AntennaDensity_residents_weekends_October-November_2018_4G_processed.json" "AntennaDer</span><svg width="9" height="6" viewBox="0 0 9 6"><path d="M.5 1l4 4 4-4" fill="none" stroke="#555" stroke-width="1.200" /></svg></div><div class="fin all"><span>All files (*) (*.*)</span><svg width="9" height="6" viewBox="0 0 9 6"><path d="M.5 1l4 4 4-4" fill="none" stroke="#555" stroke-width="1.200" /></svg></div></div>
      <div class="fr2"><button class="prim">Open</button><button>Cancel</button></div>
    </div>
    <svg class="size" width="10" height="10" viewBox="0 0 10 10"><path d="M8 0h2v2H8zM4 4h2v2H4zM8 4h2v2H8zM0 8h2v2H0zM4 8h2v2H4zM8 8h2v2H8z" fill="#bfbfbf" /></svg>
  </div>

  <svg class="ink" width="1997" height="1259" viewBox="0 0 1997 1259">
    <path d="M154 27l-3-5-7-1M152 27q-7-2-12 1l-24-2q-3 11-2 22 2 7 8 9l13 2 18-4 8-5 0-15-3-10-8-4M125 71l7-1 11-8 1 18-2 9" />
    <path d="M1218 215q-1-3-4-3l-18 0q-10 2-18 7l3 28 1 49-5 18-2 16-4 26-1 40 0 154 6 34 1 18 8 0 9-4h24l4 4" />
    <path d="M1132 403q9-1 11 3l6 13 0 10-17 0M1149 430l3 17 3 8q0 7-6 8l-19-1" />
    <path d="M1787 723q-8-2-12 2l-9 7-2 14 1 6 28 3 10 5 20-1 11-7 17-5q5-7 3-14l-10-4-17-1-15-2-28-1M1793 757l-10 7-10 9 0 7 29-2M1789 773l-6 0 0 16 2 11" />
    <path d="M1358 933l-12 1 1-4M1310 961l2-8 18-11 17-13 30 0 9 8 11 2q4 7 3 13l-7 6-20 4q-32 0-61 0M1407 959l1-5 28-1-2 11-8 22 23 0" />
  </svg>
</div>

<style>
  :global(body) { margin: 0; overflow: hidden; }
  .app { position: relative; width: 1997px; height: 1259px; overflow: hidden; background: #f0f0f0; font: 11px/14px "DejaVu Sans Condensed", "DejaVu Sans", sans-serif; color: #000; display: flex; flex-direction: column; letter-spacing: -.3px; }
  .app :global(svg) { flex: none; display: block; }
  * { box-sizing: border-box; }
  header { height: 21px; background: #fff; color: #777; display: flex; align-items: center; gap: 6px; padding-bottom: 3px; margin-left: -3px; font: 12px/16px "Open Sans", sans-serif; letter-spacing: -.42px; }
  .menu { height: 21px; padding: 4px 0 0 4px; display: grid; grid-template-columns: 49px 33px 37px 42px 54px 48px 45px 47px 61px 37px 66px auto; white-space: nowrap; font: 12px/14px "Open Sans", sans-serif; letter-spacing: -.6px; }
  .toolbar { height: 39.500px; border-top: 1px solid #b4b4b4; box-shadow: inset 0 1px #fcfcfc; display: flex; align-items: center; padding: 0 0 2px 6px; }
  .tool { width: 34.950px; display: grid; place-items: center; }
  .tool > span { width: 34px; height: 34px; display: grid; place-items: center; }
  .pressed { background: #d4d4d4; border: 1px solid #777; border-radius: 3px; }
  .handle { width: 6px; height: 32px; margin: 0 3px 0 6px; background: radial-gradient(circle at 2px 2px, #bbb 1px, transparent 1.300px) 0 0 / 6px 5px; }
  .caret { width: 0; height: 0; border: 4.500px solid transparent; border-top: 6px solid #8a8a8a; border-bottom: 0; margin: 0 2px; flex: none; }
  .caret.dark { border-top-color: #000; }
  .conn { width: 94px; padding-left: 6px; color: #0b5d8f; font: 11px/15px "DejaVu Sans Condensed", sans-serif; letter-spacing: -.35px; white-space: nowrap; }
  main { flex: 1; min-height: 0; display: flex; border-top: 2px solid #b4b4b4; }
  aside { width: 47px; border-right: 1px solid #b4b4b4; padding: 5px 0 0 3px; display: flex; flex-direction: column; }
  .grip { height: 5px; flex: 1; background: radial-gradient(circle at 2px 2px, #c4c4c4 1px, transparent 1.300px) 0 0 / 5px 5px; }
  aside .grip { flex: none; margin: 0 4px -1px -2px; }
  .stool { height: 34px; display: flex; align-items: center; gap: 5px; }
  .stool:nth-child(n+12) { padding-left: 5px; }
  aside .end { margin-top: 12px; }
  .docks { width: 660px; padding-left: 1px; display: flex; flex-direction: column; }
  .ptitle { height: 15px; display: flex; align-items: center; gap: 17px; padding: 0 1px 0 3px; font: 11px/14px "Open Sans", sans-serif; letter-spacing: -.3px; }
  .ptitle svg { margin-left: -12px; }
  .ptools { height: 34px; display: flex; align-items: center; }
  .ptools span { width: 27px; display: grid; place-items: center; }
  .ptools.b { padding-left: 1px; }
  .tree { background: #fff; border: 1px solid #a8a8a8; border-width: 2px 2px 2px 1px; border-radius: 2px; padding-left: 5px; letter-spacing: -.1px; }
  .btree { height: 591px; padding-top: 1px; }
  .split { width: 218px; height: 5px; margin: 2px 0 1px 217px; background: radial-gradient(circle at 2px 2px, #c4c4c4 1px, transparent 1.300px) 0 0 / 5px 5px; }
  .ptools.l { height: 33px; margin: 0 0 0 1px; }
  .ltree { flex: 1; padding-top: 0; border-bottom: 0; }
  .row { height: 16px; display: flex; align-items: center; position: relative; white-space: nowrap; }
  .stem { position: absolute; left: 4px; top: 0; bottom: 0; border-left: 1px dotted #999; }
  .row:last-child .stem { display: none; }
  .child { padding-left: 20px; }
  .child .stem { left: 24px; bottom: 0; }
  .ex { position: relative; width: 18px; height: 16px; display: flex; align-items: center; }
  .ex::before { content: ''; position: absolute; left: 4px; right: 3px; top: 7px; border-top: 1px dotted #999; }
  .ex b { position: relative; width: 9px; height: 9px; border: 1px solid #999; background: #fff; }
  .ex b::before { content: ''; position: absolute; left: 1px; right: 1px; top: 3px; height: 1px; background: #555; }
  .ex b::after { content: ''; position: absolute; top: 1px; bottom: 1px; left: 3px; width: 1px; background: #555; }
  .ex b.minus::after { display: none; }
  .lab { margin-left: 5px; line-height: 16px; padding-top: 2px; }
  .chk { width: 13px; height: 15px; border: 1px solid #c4c4c4; border-radius: 2px; margin-right: 6px; background: #fff; font: 12px/11px "DejaVu Sans", sans-serif; display: grid; place-items: center; letter-spacing: 0; }
  .grey { color: #999; }
  .ltree .child .lab { margin-left: 6px; }
  .ltree .row:not(.child) .lab { margin-left: 4px; }
  .hl { background: #f0f0f0; margin-left: -5px; padding-left: 25px; }
  .hl .stem { left: 29px; }
  .bold { font-weight: 700; font-size: 11.500px; letter-spacing: .04px; }
  .vsplit { width: 6px; margin: 420px 0 0 2px; height: 560px; flex: none; background: radial-gradient(circle at 2px 2px, #c4c4c4 1px, transparent 1.300px) 0 0 / 6px 5px; }
  .map { width: 1284px; flex: none; border-left: 1px solid #aaa; background: #fafaf8; margin-left: -2px; }
  .towns { font: 600 8.500px "Open Sans", sans-serif; fill: #95a2b1; text-anchor: middle; letter-spacing: 0; }
  .ink { position: absolute; left: 0; top: 0; fill: none; stroke: #ed1c24; stroke-width: 5.500; stroke-linecap: round; stroke-linejoin: round; pointer-events: none; }

  button { font: inherit; letter-spacing: inherit; padding: 0; }
  .vdlg { position: absolute; left: 926px; top: 783px; width: 479px; height: 235px; background: #f0f0f0; border: 1px solid #aaa; box-shadow: 0 5px 16px rgba(0, 0, 0, .4); padding: 0 11px; letter-spacing: -.25px; }
  .vtitle { height: 30px; margin: 0 -11px; padding: 0 17px 0 10px; background: #fff; display: flex; align-items: center; gap: 5px; color: #8a8a8a; font: 12px/16px "Open Sans", sans-serif; letter-spacing: -.3px; }
  .vtitle em { margin-left: auto; margin-right: 32px; font: 14px "Open Sans", sans-serif; }
  fieldset { border: 1px solid #b5b5b5; border-radius: 3px; margin: 0; padding: 0 11px; position: relative; }
  legend { font-weight: 700; color: #444; padding: 0 2px; margin-left: -4px; line-height: 14px; letter-spacing: -.15px; }
  .f1 { height: 84px; margin-top: 12px; }
  .f2 { height: 61px; margin-top: 6px; }
  .radios { display: grid; grid-template-columns: 49px 129px 128px auto; margin: 14px 0 0 1px; height: 14px; }
  .radios span { display: flex; align-items: center; gap: 6px; }
  .radios i { width: 12px; height: 12px; border-radius: 50%; border: 1px solid #bbb; background: #fff; }
  .radios .sel { background: radial-gradient(#000 3.500px, #fff 4.200px); }
  .enc { display: flex; align-items: center; margin-top: 9px; }
  .enc > span { width: 50px; }
  .combo { width: 380px; height: 20px; border: 1px solid #aaa; border-radius: 2px; background: linear-gradient(#fdfdfd, #e0e0e0); display: flex; align-items: center; padding-left: 3px; }
  .combo b { margin-left: auto; border-left: 1px solid #bbb; height: 100%; width: 15px; display: grid; place-items: center; }
  .data { display: flex; align-items: center; margin-top: 12px; }
  .data > span { width: 45px; }
  .inp { width: 304px; height: 20px; background: #fff; border: 1px solid #b0b0b0; border-radius: 3px; margin-right: 6px; }
  .vdlg button { width: 75px; height: 23px; border: 1px solid #aaa; border-radius: 2px; background: linear-gradient(#fefefe, #e4e4e4); }
  .vdlg .def { border-color: #555; }
  .vbtns { display: flex; justify-content: flex-end; gap: 10px; margin-top: 7px; }

  .fdlg { position: absolute; left: 1018px; top: 92px; width: 946px; height: 674px; background: #fff; border: 1px solid #1a7fd4; box-shadow: 0 8px 20px rgba(0, 0, 0, .45); font: 12px/16px "Open Sans", sans-serif; letter-spacing: -.32px; display: flex; flex-direction: column; white-space: nowrap; }
  .ftitle { height: 31px; display: flex; align-items: center; padding: 0 10px 2px 10px; gap: 5px; }
  .ftitle svg:last-child { margin-left: auto; }
  .ftitle span { letter-spacing: -.33px; }
  .addr { height: 34px; display: flex; padding: 5px 12px 0 12px; }
  .arrows { margin: 4px 2px 0 0; }
  .path { width: 613px; height: 22px; border: 1px solid #d9d9d9; display: flex; align-items: center; padding-left: 3px; letter-spacing: -.25px; }
  .path em { font: 17px/16px "Open Sans", sans-serif; color: #555; width: 23px; text-align: center; padding-bottom: 3px; }
  .p0 { width: 20px; padding: 0 0 2px 4px; font-size: 14px; color: #555; }
  .p1 { width: 64px; } .p2 { width: 30px; } .p3 { width: 127px; } .p4 { width: 130px; }
  .drop { margin-left: auto; margin-right: 4px; }
  .path b { width: 20px; height: 100%; border-left: 1px solid #d9d9d9; display: grid; place-items: center; }
  .search { margin-left: auto; width: 202px; height: 22px; border: 1px solid #d9d9d9; padding: 0 8px; display: flex; align-items: center; justify-content: space-between; color: #6d6d6d; letter-spacing: -.3px; }
  .ftools { height: 31px; background: #f5f6f7; border-bottom: 1px solid #e5e7ea; display: flex; align-items: center; padding: 0 14px 0 18px; color: #1e395b; letter-spacing: -.3px; }
  .ftools .caret { border-width: 4px; border-top: 4px solid #1e395b; border-bottom: 0; margin-left: 5px; }
  .nf { margin-left: 29px; }
  .vw { margin-left: auto; margin-right: 4px; }
  .pv { margin: 0 20px 0 19px; }
  .hp { width: 17px; height: 17px; border-radius: 50%; background: #0468c8; color: #fff; text-align: center; font-weight: 700; }
  .fbody { height: 499px; display: flex; }
  .places { width: 139px; overflow: hidden; }
  .place { height: 24px; display: flex; align-items: center; padding-left: 24px; gap: 5px; letter-spacing: -.35px; }
  .place.sub { padding-left: 32px; }
  .place b { margin-left: auto; margin-right: 3px; }
  .place.big { height: 32px; }
  .place.gap { margin-top: 4px; }
  .last { background: #d9d9d9; }
  .sb { width: 16px; margin-left: 1px; background: #f0f0f0; display: flex; flex-direction: column; align-items: center; padding: 7px 0 5px; }
  .sb i { width: 16px; height: 364px; background: #cdcdcd; margin: 82px 0 auto; }
  .files { position: relative; flex: 1; padding-left: 19px; }
  .sort { position: absolute; left: 202px; top: 0; }
  .head { height: 25px; display: flex; align-items: center; color: #4c607a; letter-spacing: -.2px; margin-bottom: 6px; }
  .head span { height: 25px; line-height: 25px; padding-left: 6px; border-right: 1px solid #e3e3e3; width: 120px; }
  .head span:first-child { width: 379px; padding-left: 2px; }
  .head span:last-child { width: 80px; }
  .file { width: 696px; height: 21px; background: #cce8ff; border-bottom: 1px solid #99d1ff; display: flex; align-items: center; color: #6d6d6d; padding: 1px 0 0 5px; margin-left: -1px; }
  .file.focus { outline: 1px solid #80c0f8; outline-offset: -1px; }
  .file span { width: 120px; flex: none; letter-spacing: -.32px; }
  .file .n { width: 367px; padding-left: 5px; color: #000; letter-spacing: -.37px; }
  .file .s { width: 65px; text-align: right; }
  .ffoot { flex: 1; background: #f0f0f0; padding: 9px 17px 0 0; }
  .fr1 { display: flex; justify-content: flex-end; align-items: center; height: 24px; }
  .fr1 > span { margin-right: 6px; }
  .fin { width: 538px; height: 24px; background: #fff; border: 1px solid #7a7a7a; display: flex; align-items: center; padding: 0 4px 0 3px; justify-content: space-between; overflow: hidden; letter-spacing: -.38px; }
  .all { width: 188px; height: 23px; background: #e1e1e1; border-color: #adadad; margin-left: 12px; letter-spacing: -.2px; }
  .fr2 { display: flex; justify-content: flex-end; gap: 14px; margin-top: 6px; }
  .fr2 button { width: 86px; height: 24px; border: 1px solid #adadad; background: #e1e1e1; }
  .fr2 .prim { border: 2px solid #0078d7; }
  .size { position: absolute; right: 3px; bottom: 3px; }
</style>
